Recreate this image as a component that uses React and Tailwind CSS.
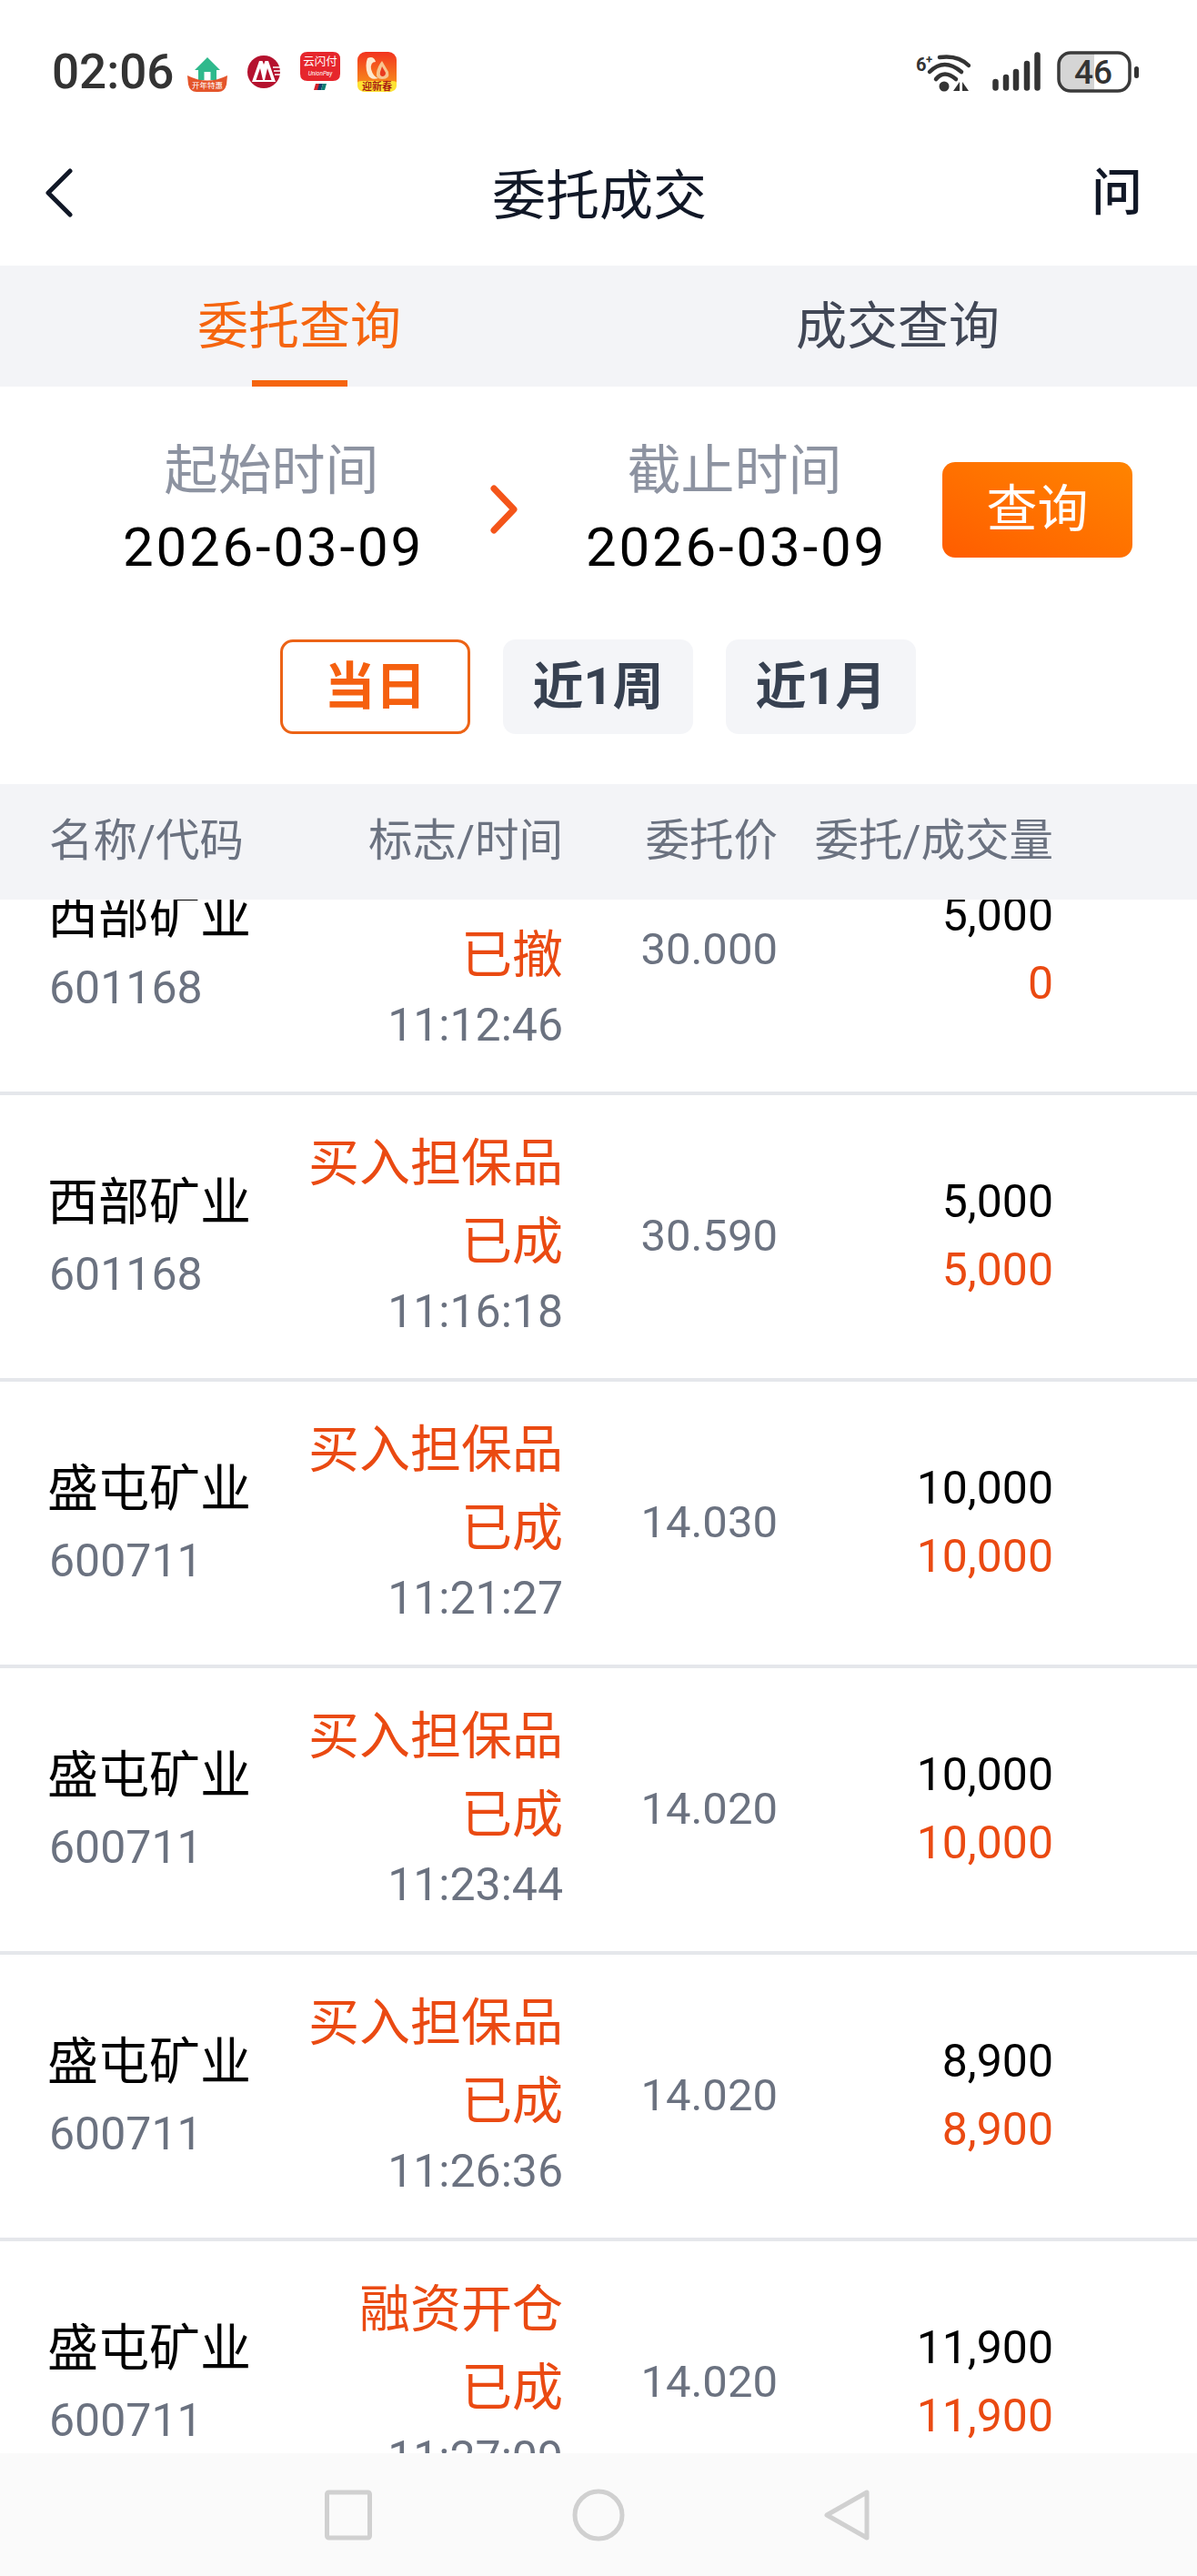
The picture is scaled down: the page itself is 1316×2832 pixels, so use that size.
const orders = [
    { name: '西部矿业', code: '601168', type: '买入担保品', status: '已撤', time: '11:12:46', price: '30.000', amount: '5,000', filled: '0' },
    { name: '西部矿业', code: '601168', type: '买入担保品', status: '已成', time: '11:16:18', price: '30.590', amount: '5,000', filled: '5,000' },
    { name: '盛屯矿业', code: '600711', type: '买入担保品', status: '已成', time: '11:21:27', price: '14.030', amount: '10,000', filled: '10,000' },
    { name: '盛屯矿业', code: '600711', type: '买入担保品', status: '已成', time: '11:23:44', price: '14.020', amount: '10,000', filled: '10,000' },
    { name: '盛屯矿业', code: '600711', type: '买入担保品', status: '已成', time: '11:26:36', price: '14.020', amount: '8,900', filled: '8,900' },
    { name: '盛屯矿业', code: '600711', type: '融资开仓', status: '已成', time: '11:27:09', price: '14.020', amount: '11,900', filled: '11,900' },
];

const COLS = 'grid grid-cols-[250px_315px_236px_303px] pl-[54px]';
const FONT = 'font-["Roboto","Noto_Sans_CJK_SC",sans-serif]';

function HouseIcon() {
    return (
        <svg width="44" height="44" viewBox="0 0 44 44">
            <path d="M22 6 L36 20 H32 V31 H12 V20 H8 Z" fill="#2fb98c" />
            <rect x="18.5" y="22" width="7" height="9" fill="#fff" />
            <path d="M0 26 Q22 37 44 26 L43 36 Q41 44 34 44 H10 Q3 44 1 36 Z" fill="#e4552b" />
            <text x="22" y="40" textAnchor="middle" fontSize="8.5" fill="#fff" fontFamily="Noto Sans CJK SC">开年特惠</text>
        </svg>
    );
}

function BankIcon() {
    return (
        <svg width="36" height="44" viewBox="0 0 36 44">
            <circle cx="18" cy="22" r="18" fill="#b5122e" />
            <path d="M5 33 L13 10 H16.5 L18 14 L19.5 10 H23 L31 33 Z" fill="#fff" />
            <path d="M9.5 31 L14 18 L17 31 Z M19 31 L22 18 L26.5 31 Z" fill="#b5122e" />
            <path d="M28 17 H36 M29 21 H36 M30 25 H36" stroke="#fff" strokeWidth="1.4" />
        </svg>
    );
}

function UnionIcon() {
    return (
        <svg width="44" height="44" viewBox="0 0 44 44">
            <path d="M8 0 H36 Q44 0 44 8 V24 Q44 32 36 32 H8 Q0 32 0 24 V8 Q0 0 8 0 Z" fill="#e6262c" />
            <text x="22" y="15" textAnchor="middle" fontSize="12.5" fill="#fff" fontFamily="Noto Sans CJK SC">云闪付</text>
            <text x="22" y="26" textAnchor="middle" fontSize="6.5" fontStyle="italic" fill="#fff" fontFamily="Roboto">UnionPay</text>
            <path d="M17 35 H22 L20 42 H15 Z" fill="#d6232c" />
            <path d="M21 35 H25 L23 42 H19 Z" fill="#123f6d" />
            <path d="M25 35 H29 L27 42 H23 Z" fill="#0f7c72" />
        </svg>
    );
}

function SquirrelIcon() {
    return (
        <svg width="43" height="44" viewBox="0 0 43 44">
            <defs>
                <linearGradient id="nut" x1="0" y1="0" x2="0" y2="1">
                    <stop offset="0" stopColor="#f2331f" />
                    <stop offset="1" stopColor="#f9a21a" />
                </linearGradient>
            </defs>
            <rect width="43" height="44" rx="9" fill="url(#nut)" />
            <path d="M11 7 Q18 4 20 11 Q14 11 15 19 Q17 27 23 29 Q14 32 11 24 Q8 15 11 7 Z" fill="#fde9cf" />
            <path d="M27 10 L34 22 Q36 30 27 30 Q20 30 21 23 Q22 16 27 10 Z" fill="#f8c58f" />
            <path d="M27 16 L31 23 Q31 27 27 27 Q24 26 25 22 Z" fill="#e93a1f" />
            <path d="M5 32 H38 Q43 32 43 34 V37 Q43 44 34 44 H9 Q0 44 0 37 V34 Q0 32 5 32 Z" fill="#fde233" />
            <text x="21.5" y="42" textAnchor="middle" fontSize="11" fontWeight="700" fill="#a81c12" fontFamily="Noto Sans CJK SC">迎新春</text>
        </svg>
    );
}

function WifiIcon() {
    return (
        <svg width="60" height="44" viewBox="0 0 60 44" fill="none" stroke="#333" strokeLinecap="round">
            <text x="0" y="21" fontSize="20" fontWeight="700" fill="#333" stroke="none" fontFamily="Roboto">6</text>
            <text x="11" y="13" fontSize="13" fontWeight="700" fill="#333" stroke="none" fontFamily="Roboto">+</text>
            <path d="M26 6 Q46 3 58 15" strokeWidth="4.5" />
            <path d="M15 22 Q31 6 50 22" strokeWidth="4.5" />
            <path d="M22 30 Q31 19 44 30" strokeWidth="4.5" />
            <circle cx="31" cy="38" r="5.5" fill="#333" stroke="none" />
            <path d="M48 33 V43 H41 Z M51 33 V43 H58 Z" fill="#333" stroke="none" />
        </svg>
    );
}

function SignalIcon() {
    return (
        <svg width="53" height="44" viewBox="0 0 53 44" fill="none" stroke="#333" strokeWidth="6.5" strokeLinecap="round">
            <path d="M3.5 33 V39.5 M15 28 V39.5 M26 22 V39.5 M38 13 V39.5 M49.5 3.5 V39.5" />
        </svg>
    );
}

function BatteryIcon() {
    return (
        <svg width="90" height="46" viewBox="0 0 90 46">
            <path d="M15 2 H41 V44 H15 Q2 44 2 31 V15 Q2 2 15 2 Z" fill="#d5d5d5" />
            <rect x="2" y="2" width="78" height="42" rx="13" fill="none" stroke="#3a3a3a" strokeWidth="3.5" />
            <text x="40" y="36" textAnchor="middle" fontSize="37" fontWeight="500" fill="#333" fontFamily="Roboto">46</text>
            <rect x="85" y="17" width="5" height="13" rx="2.5" fill="#333" />
        </svg>
    );
}

function StatusBar() {
    return (
        <div className="flex h-[132px] items-center justify-between pl-[57px] pr-[64px] pt-[26px]">
            <div className="flex items-center">
                <span className="text-[53px] leading-none font-medium text-[#333]">02:06</span>
                <div className="ml-[15px]"><HouseIcon /></div>
                <div className="ml-[22px]"><BankIcon /></div>
                <div className="ml-[22px]"><UnionIcon /></div>
                <div className="ml-[19px]"><SquirrelIcon /></div>
            </div>
            <div className="flex items-center">
                <WifiIcon />
                <div className="ml-[24px]"><SignalIcon /></div>
                <div className="ml-[18px]"><BatteryIcon /></div>
            </div>
        </div>
    );
}

function OrderRow({ order }) {
    return (
        <div className={`${COLS} h-[315px] items-center border-b-4 border-[#e5e7eb] pb-[1px]`}>
            <div className="mt-[5px] whitespace-nowrap">
                <div className="-ml-[2px] text-[56px] leading-[79px] text-black">{order.name}</div>
                <div className="text-[50px] leading-[79px] text-[#6b7280]">{order.code}</div>
            </div>
            <div className="text-right whitespace-nowrap">
                <div className="-mt-[3px] mb-[3px] text-[56px] leading-[83px] text-[#ea4a12]">{order.type}</div>
                <div className="text-[56px] leading-[83px] text-[#ea4a12]">{order.status}</div>
                <div className="text-[50px] leading-[71px] text-[#6b7280]">{order.time}</div>
            </div>
            <div className="text-right text-[49px] text-[#6b7280]">{order.price}</div>
            <div className="text-right text-[50px] leading-[75px]">
                <div className="text-black">{order.amount}</div>
                <div className="text-[#ea4a12]">{order.filled}</div>
            </div>
        </div>
    );
}

export default function App() {
    return (
        <div className={`${FONT} flex h-[2832px] w-[1316px] flex-col overflow-hidden bg-white`}>
            <StatusBar />

            <div className="grid h-[160px] grid-cols-[1fr_auto_1fr] items-center pl-[50px] pr-[60px]">
                <svg width="30" height="54" viewBox="0 0 30 54" fill="none" stroke="#111827" strokeWidth="5" strokeLinecap="round" strokeLinejoin="round">
                    <path d="M27 3 L3 27 L27 51" />
                </svg>
                <h1 className="ml-[12px] mt-[6px] text-[59px] leading-none font-normal text-[#111827]">委托成交</h1>
                <span className="justify-self-end text-[56px] leading-none font-medium text-[#111827]">问</span>
            </div>

            <div className="grid h-[133px] grid-cols-2 bg-[#f3f4f7]">
                <div className="relative flex items-center justify-center text-[56px] text-[#f5650f]">
                    委托查询
                    <span className="absolute bottom-0 left-[277px] h-[7px] w-[105px] bg-[#f5650f]" />
                </div>
                <div className="flex items-center justify-center text-[56px] text-[#414756]">成交查询</div>
            </div>

            <div className="flex items-center pl-[135px] pt-[51px]">
                <div className="w-[327px] whitespace-nowrap text-center">
                    <div className="text-[59px] leading-[84px] text-[#8d93a1]">起始时间</div>
                    <div className="text-[60px] leading-[84px] tracking-[2.8px] text-black">2026-03-09</div>
                </div>
                <svg className="ml-[76px]" width="32" height="54" viewBox="0 0 32 54" fill="none" stroke="#f4551a" strokeWidth="7" strokeLinecap="round" strokeLinejoin="round">
                    <path d="M5 4 L27 27 L5 50" />
                </svg>
                <div className="ml-[74px] w-[327px] whitespace-nowrap text-center">
                    <div className="text-[59px] leading-[84px] text-[#8d93a1]">截止时间</div>
                    <div className="text-[60px] leading-[84px] tracking-[2.8px] text-black">2026-03-09</div>
                </div>
                <button className="ml-[65px] flex h-[105px] w-[209px] items-center justify-center rounded-[14px] bg-gradient-to-tr from-[#ff5c00] to-[#ff8400] text-[56px] text-white">
                    查询
                </button>
            </div>

            <div className="mt-[59px] flex justify-center gap-[36px] pr-[1px]">
                <div className="flex h-[104px] w-[209px] items-center justify-center rounded-[14px] border-[3px] border-[#ec6316] text-[56px] font-bold text-[#f5600f]">当日</div>
                <div className="flex h-[104px] w-[209px] items-center justify-center rounded-[14px] bg-[#f4f5f8] text-[56px] font-bold text-[#374151]">近1周</div>
                <div className="flex h-[104px] w-[209px] items-center justify-center rounded-[14px] bg-[#f4f5f8] text-[56px] font-bold text-[#374151]">近1月</div>
            </div>

            <div className={`${COLS} mt-[55px] h-[127px] shrink-0 items-center bg-[#f3f4f7] text-[48.5px] text-[#6b7280]`}>
                <div>名称/代码</div>
                <div className="text-right">标志/时间</div>
                <div className="text-right">委托价</div>
                <div className="text-right">委托/成交量</div>
            </div>

            {/* list is scrolled 100px past the first row's top */}
            <div className="min-h-0 flex-1 overflow-hidden">
                <div className="-mt-[100px]">
                    {orders.map((order) => (
                        <OrderRow key={order.time} order={order} />
                    ))}
                </div>
            </div>

            <div className="flex h-[135px] shrink-0 items-center justify-center bg-[#fafafa]">
                <svg width="620" height="60" viewBox="0 0 620 60" fill="none" stroke="#d0d0d0" strokeWidth="5" strokeLinejoin="round">
                    <rect x="11.5" y="5" width="47" height="50" rx="2" />
                    <circle cx="310" cy="30" r="26" />
                    <path d="M605 5 V55 L561 30 Z" />
                </svg>
            </div>
        </div>
    );
}
